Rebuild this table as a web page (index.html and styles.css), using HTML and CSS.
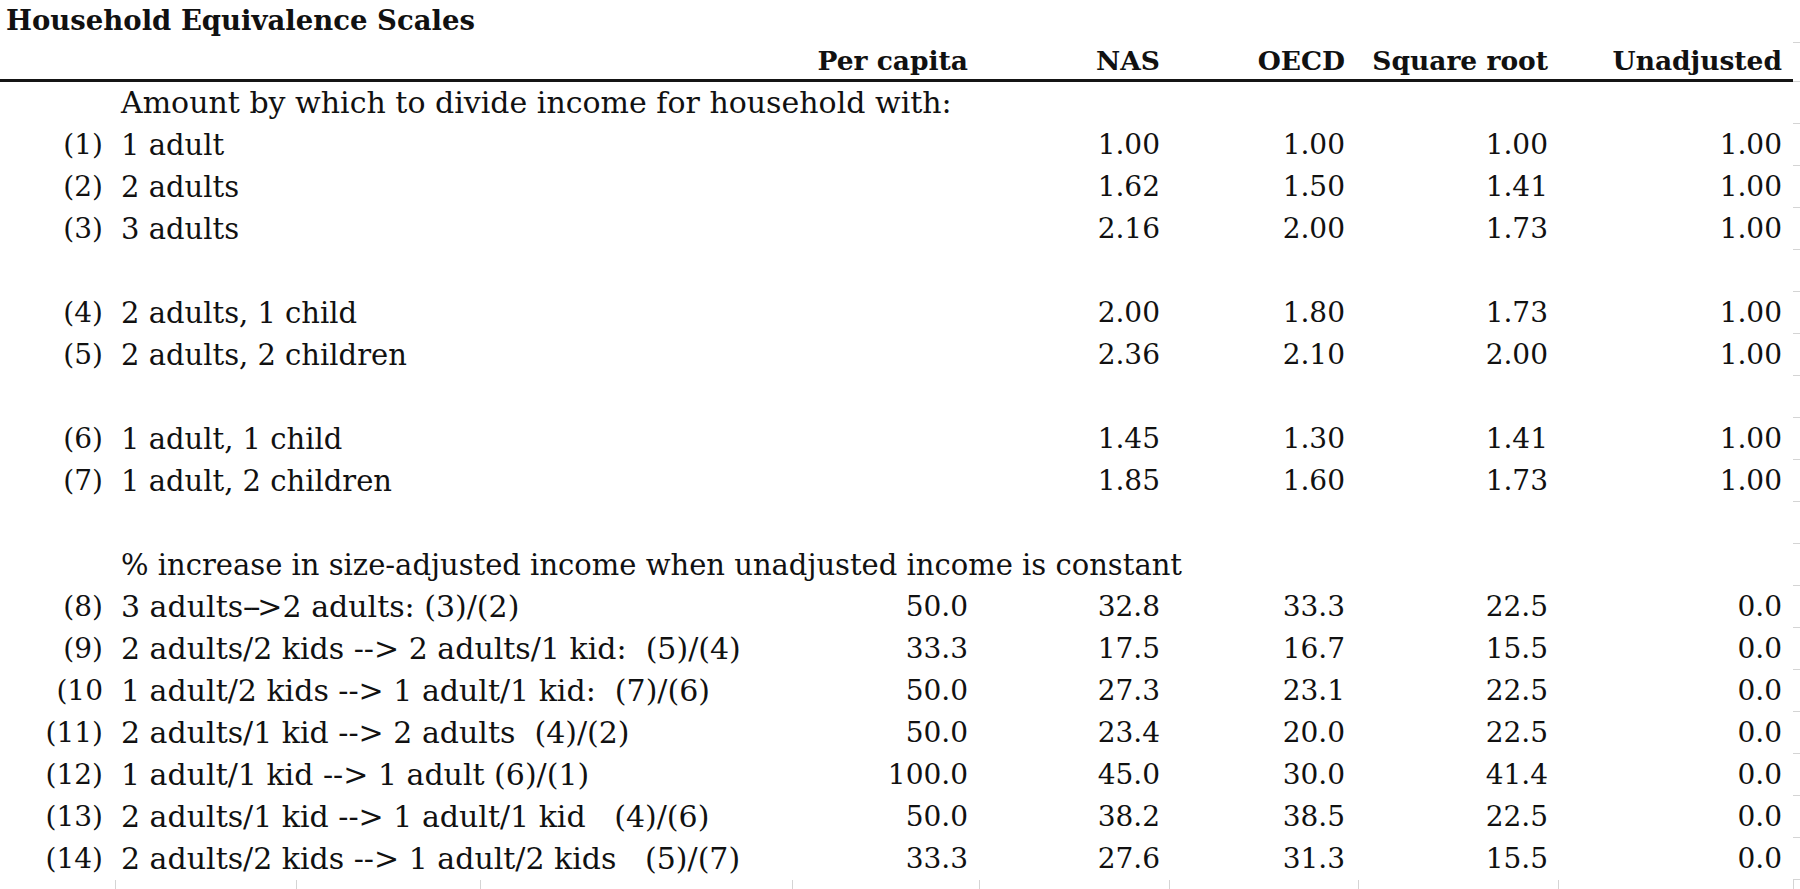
FILE: index.html
```html
<!DOCTYPE html>
<html lang="en">
<head>
<meta charset="utf-8">
<title>Household Equivalence Scales</title>
<link rel="stylesheet" href="styles.css">
</head>
<body>
<div class="sheet">
  <div class="row title-row">
    <div class="title">Household Equivalence Scales</div>
    <div class="edge"></div>
  </div>
  <div class="row head-row">
    <div class="num"></div>
    <div class="label"></div>
    <div class="val e">Per capita</div>
    <div class="val f">NAS</div>
    <div class="val g">OECD</div>
    <div class="val h">Square root</div>
    <div class="val i">Unadjusted</div>
    <div class="edge"></div>
  </div>

  <div class="row"><div class="num"></div><div class="label wide">Amount by which to divide income for household with:</div><div class="edge"></div></div>
  <div class="row"><div class="num">(1)</div><div class="label small">1 adult</div><div class="val e"></div><div class="val f">1.00</div><div class="val g">1.00</div><div class="val h">1.00</div><div class="val i">1.00</div><div class="edge"></div></div>
  <div class="row"><div class="num">(2)</div><div class="label small">2 adults</div><div class="val e"></div><div class="val f">1.62</div><div class="val g">1.50</div><div class="val h">1.41</div><div class="val i">1.00</div><div class="edge"></div></div>
  <div class="row"><div class="num">(3)</div><div class="label small">3 adults</div><div class="val e"></div><div class="val f">2.16</div><div class="val g">2.00</div><div class="val h">1.73</div><div class="val i">1.00</div><div class="edge"></div></div>
  <div class="row"><div class="edge"></div></div>
  <div class="row"><div class="num">(4)</div><div class="label small">2 adults, 1 child</div><div class="val e"></div><div class="val f">2.00</div><div class="val g">1.80</div><div class="val h">1.73</div><div class="val i">1.00</div><div class="edge"></div></div>
  <div class="row"><div class="num">(5)</div><div class="label small">2 adults, 2 children</div><div class="val e"></div><div class="val f">2.36</div><div class="val g">2.10</div><div class="val h">2.00</div><div class="val i">1.00</div><div class="edge"></div></div>
  <div class="row"><div class="edge"></div></div>
  <div class="row"><div class="num">(6)</div><div class="label small">1 adult, 1 child</div><div class="val e"></div><div class="val f">1.45</div><div class="val g">1.30</div><div class="val h">1.41</div><div class="val i">1.00</div><div class="edge"></div></div>
  <div class="row"><div class="num">(7)</div><div class="label small">1 adult, 2 children</div><div class="val e"></div><div class="val f">1.85</div><div class="val g">1.60</div><div class="val h">1.73</div><div class="val i">1.00</div><div class="edge"></div></div>
  <div class="row"><div class="edge"></div></div>

  <div class="row"><div class="num"></div><div class="label wide note">% increase in size-adjusted income when unadjusted income is constant</div><div class="edge"></div></div>
  <div class="row"><div class="num">(8)</div><div class="label">3 adults<span class="arrow">--&gt;</span>2 adults: (3)/(2)</div><div class="val e">50.0</div><div class="val f">32.8</div><div class="val g">33.3</div><div class="val h">22.5</div><div class="val i">0.0</div><div class="edge"></div></div>
  <div class="row"><div class="num">(9)</div><div class="label">2 adults/2 kids --&gt; 2 adults/1 kid:&nbsp; (5)/(4)</div><div class="val e">33.3</div><div class="val f">17.5</div><div class="val g">16.7</div><div class="val h">15.5</div><div class="val i">0.0</div><div class="edge"></div></div>
  <div class="row"><div class="num">(10</div><div class="label">1 adult/2 kids --&gt; 1 adult/1 kid:&nbsp; (7)/(6)</div><div class="val e">50.0</div><div class="val f">27.3</div><div class="val g">23.1</div><div class="val h">22.5</div><div class="val i">0.0</div><div class="edge"></div></div>
  <div class="row"><div class="num">(11)</div><div class="label">2 adults/1 kid --&gt; 2 adults&nbsp; (4)/(2)</div><div class="val e">50.0</div><div class="val f">23.4</div><div class="val g">20.0</div><div class="val h">22.5</div><div class="val i">0.0</div><div class="edge"></div></div>
  <div class="row"><div class="num">(12)</div><div class="label">1 adult/1 kid --&gt; 1 adult (6)/(1)</div><div class="val e">100.0</div><div class="val f">45.0</div><div class="val g">30.0</div><div class="val h">41.4</div><div class="val i">0.0</div><div class="edge"></div></div>
  <div class="row"><div class="num">(13)</div><div class="label">2 adults/1 kid --&gt; 1 adult/1 kid&nbsp;&nbsp; (4)/(6)</div><div class="val e">50.0</div><div class="val f">38.2</div><div class="val g">38.5</div><div class="val h">22.5</div><div class="val i">0.0</div><div class="edge"></div></div>
  <div class="row"><div class="num">(14)</div><div class="label">2 adults/2 kids --&gt; 1 adult/2 kids&nbsp;&nbsp; (5)/(7)</div><div class="val e">33.3</div><div class="val f">27.6</div><div class="val g">31.3</div><div class="val h">15.5</div><div class="val i">0.0</div><div class="edge"></div></div>

  <div class="row ticks">
    <div class="tick"></div><div class="tick"></div><div class="tick"></div><div class="tick"></div>
    <div class="tick"></div><div class="tick"></div><div class="tick"></div><div class="tick"></div>
    <div class="tick"></div><div class="tick"></div>
  </div>
</div>
</body>
</html>
```

FILE: styles.css
```css
* { box-sizing: border-box; }

html, body {
  margin: 0;
  padding: 0;
  background: #ffffff;
}

body {
  width: 1800px;
  height: 889px;
  overflow: hidden;
  font-family: "DejaVu Serif", "Liberation Serif", serif;
  font-size: 28px;
  color: #111111;
}

.sheet {
  display: flex;
  flex-direction: column;
}

.row {
  display: grid;
  grid-template-columns: 115px 181px 184px 312px 187px 190px 189px 200px 235px 7px;
  height: 42px;
  line-height: 42px;
  white-space: nowrap;
}

.title-row {
  height: 43px;
  line-height: 40px;
}

.title {
  grid-column: 1 / 10;
  padding-left: 6px;
  font-weight: bold;
  font-size: 27.5px;
}

.head-row {
  height: 39px;
  line-height: 36px;
  font-weight: bold;
  font-size: 26.5px;
}

.head-row > div:not(.edge) {
  border-bottom: 3px solid #151515;
}

.num {
  grid-column: 1;
  text-align: right;
  padding-right: 12px;
}

.label {
  grid-column: 2 / 5;
  padding-left: 6px;
  font-size: 30px;
}

.label.small {
  font-size: 29px;
}

.label.wide {
  grid-column: 2 / 10;
}

.label.note {
  font-size: 29px;
}

.arrow {
  letter-spacing: -3px;
  padding-right: 3px;
}

.val {
  text-align: right;
}
.val.e { grid-column: 5; padding-right: 11px; }
.val.f { grid-column: 6; padding-right: 9px; }
.val.g { grid-column: 7; padding-right: 13px; }
.val.h { grid-column: 8; padding-right: 10px; }
.val.i { grid-column: 9; padding-right: 11px; }

.edge {
  grid-column: 10;
  border-bottom: 1px solid #d4d4d4;
}

.ticks {
  height: 9px;
}

.tick {
  border-left: 1px solid #d4d4d4;
}
.tick:first-child {
  border-left: none;
}
```
